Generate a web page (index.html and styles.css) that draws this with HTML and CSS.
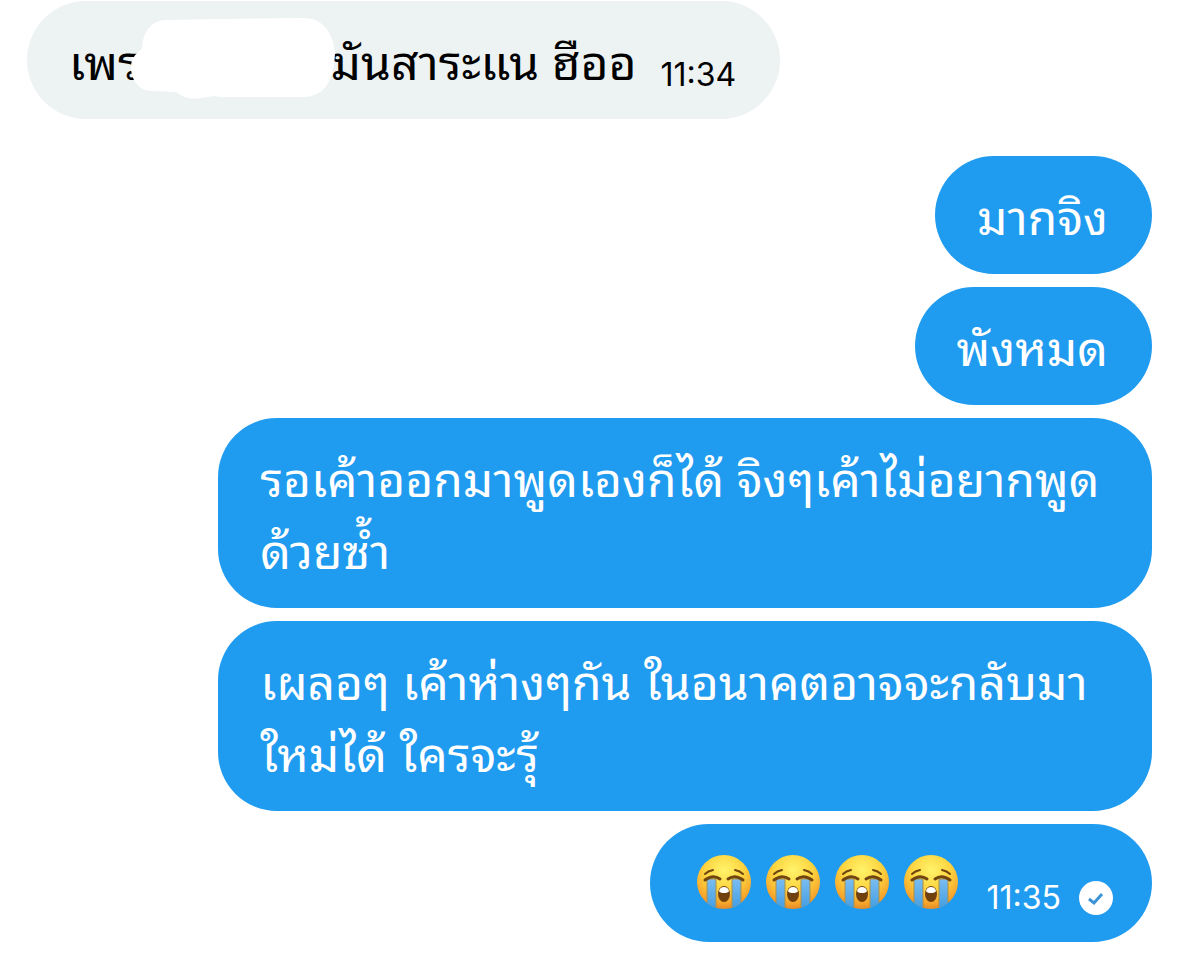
FILE: index.html
```html
<!DOCTYPE html>
<html lang="th">
<head>
  <meta charset="utf-8">
  <title>แชท</title>
  <link rel="stylesheet" href="styles.css">
</head>
<body>
  <svg width="0" height="0" class="defs">
    <defs>
      <radialGradient id="face" cx="50%" cy="28%" r="72%">
        <stop offset="0" stop-color="#fff36b"/>
        <stop offset="0.5" stop-color="#fdd43f"/>
        <stop offset="0.85" stop-color="#f6a52c"/>
        <stop offset="1" stop-color="#e28b2b"/>
      </radialGradient>
      <linearGradient id="tear" x1="0" y1="0" x2="0" y2="1">
        <stop offset="0" stop-color="#7abdf0"/>
        <stop offset="1" stop-color="#3f9be0"/>
      </linearGradient>
      <clipPath id="round"><circle cx="28" cy="28" r="27"/></clipPath>
      <symbol id="cry" viewBox="0 0 56 56">
        <circle cx="28" cy="28" r="27" fill="url(#face)"/>
        <g clip-path="url(#round)" fill="url(#tear)" stroke="#a98f4c" stroke-width="1">
          <rect x="11" y="25" width="9" height="32"/>
          <rect x="36" y="25" width="9" height="32"/>
        </g>
        <g fill="none" stroke="#704510" stroke-width="2" stroke-linecap="round">
          <path d="M9 20Q12 17 17 16"/>
          <path d="M39 16Q44 17 47 20"/>
          <path d="M9 26Q17 20 24 25" stroke-width="3"/>
          <path d="M32 25Q39 20 47 26" stroke-width="3"/>
        </g>
        <ellipse cx="28" cy="40" rx="6" ry="8" fill="#70410f"/>
        <path d="M23 37Q24 33 28 33Q32 33 33 37Q32 39 28 39Q24 39 23 37Z" fill="#fff"/>
      </symbol>
    </defs>
  </svg>

  <main class="chat">
    <div class="msg in">
      <p>เพร<svg class="blot" viewBox="0 0 204 82"><path d="M11 31C12 12 21 2 36 2L90 1L172 0C191 0 202 13 204 35C203 66 191 79 172 79L90 79C80 77 78 79 70 80C61 82 52 80 45 74L20 73C7 72 0 61 0 49C0 41 5 35 11 31Z" fill="#fff"/></svg>มันสาระแน ฮืออ</p>
      <time>11:34</time>
    </div>

    <div class="msg out"><p>มากจิง</p></div>
    <div class="msg out"><p>พังหมด</p></div>
    <div class="msg out long"><p>รอเค้าออกมาพูดเองก็ได้ จิงๆเค้าไม่อยากพูด<br>ด้วยซ้ำ</p></div>
    <div class="msg out long"><p>เผลอๆ เค้าห่างๆกัน ในอนาคตอาจจะกลับมา<br>ใหม่ได้ ใครจะรุ้</p></div>
    <div class="msg out last">
      <div class="emojis" role="img" aria-label="😭😭😭😭">
        <svg><use href="#cry"/></svg>
        <svg><use href="#cry"/></svg>
        <svg><use href="#cry"/></svg>
        <svg><use href="#cry"/></svg>
      </div>
      <time>11:35</time>
      <svg class="seen" viewBox="0 0 34 34">
        <circle cx="17" cy="17" r="17" fill="#fff"/>
        <path d="M10 18L15 22L23 13" fill="none" stroke="#3c93d6" stroke-width="3"/>
      </svg>
    </div>
  </main>
</body>
</html>
```
FILE: styles.css
```css
*{
  margin: 0;
  padding: 0;
  box-sizing: border-box;
}
body{
  background: #fff;
  font-family: "Noto Sans Thai Looped", Loma, Garuda, Umpush, Waree, "Noto Sans", sans-serif;
}
.defs{
  position: absolute;
}
.chat{
  display: flex;
  flex-direction: column;
  align-items: flex-start;
  gap: 13px;
  padding: 1px 27px 28px;
}
.msg{
  display: flex;
  align-items: flex-end;
  padding: 22px 44px 24px 42px;
  border-radius: 59px;
  font-size: 48px;
  line-height: 72px;
  white-space: nowrap;
}
.in{
  background: #edf2f3;
  color: #000;
  margin-bottom: 24px;
}
.out{
  align-self: flex-end;
  background: #1f9bf0;
  color: #fff;
}
.long{
  min-width: 83%;
}
.blot{
  width: 204px;
  height: 82px;
  margin: -28px -4px -12px -10px;
  vertical-align: middle;
  position: relative;
}
time{
  font-family: Inter, sans-serif;
  font-size: 32px;
  line-height: 40px;
  margin-left: 24px;
}
.last{
  padding-left: 46px;
  padding-right: 39px;
}
.last time{
  margin-left: 28px;
}
.emojis{
  display: flex;
  align-items: center;
  gap: 13px;
  height: 72px;
}
.emojis svg{
  width: 56px;
  height: 56px;
}
.seen{
  width: 34px;
  height: 34px;
  margin: 0 0 3px 18px;
}
```
